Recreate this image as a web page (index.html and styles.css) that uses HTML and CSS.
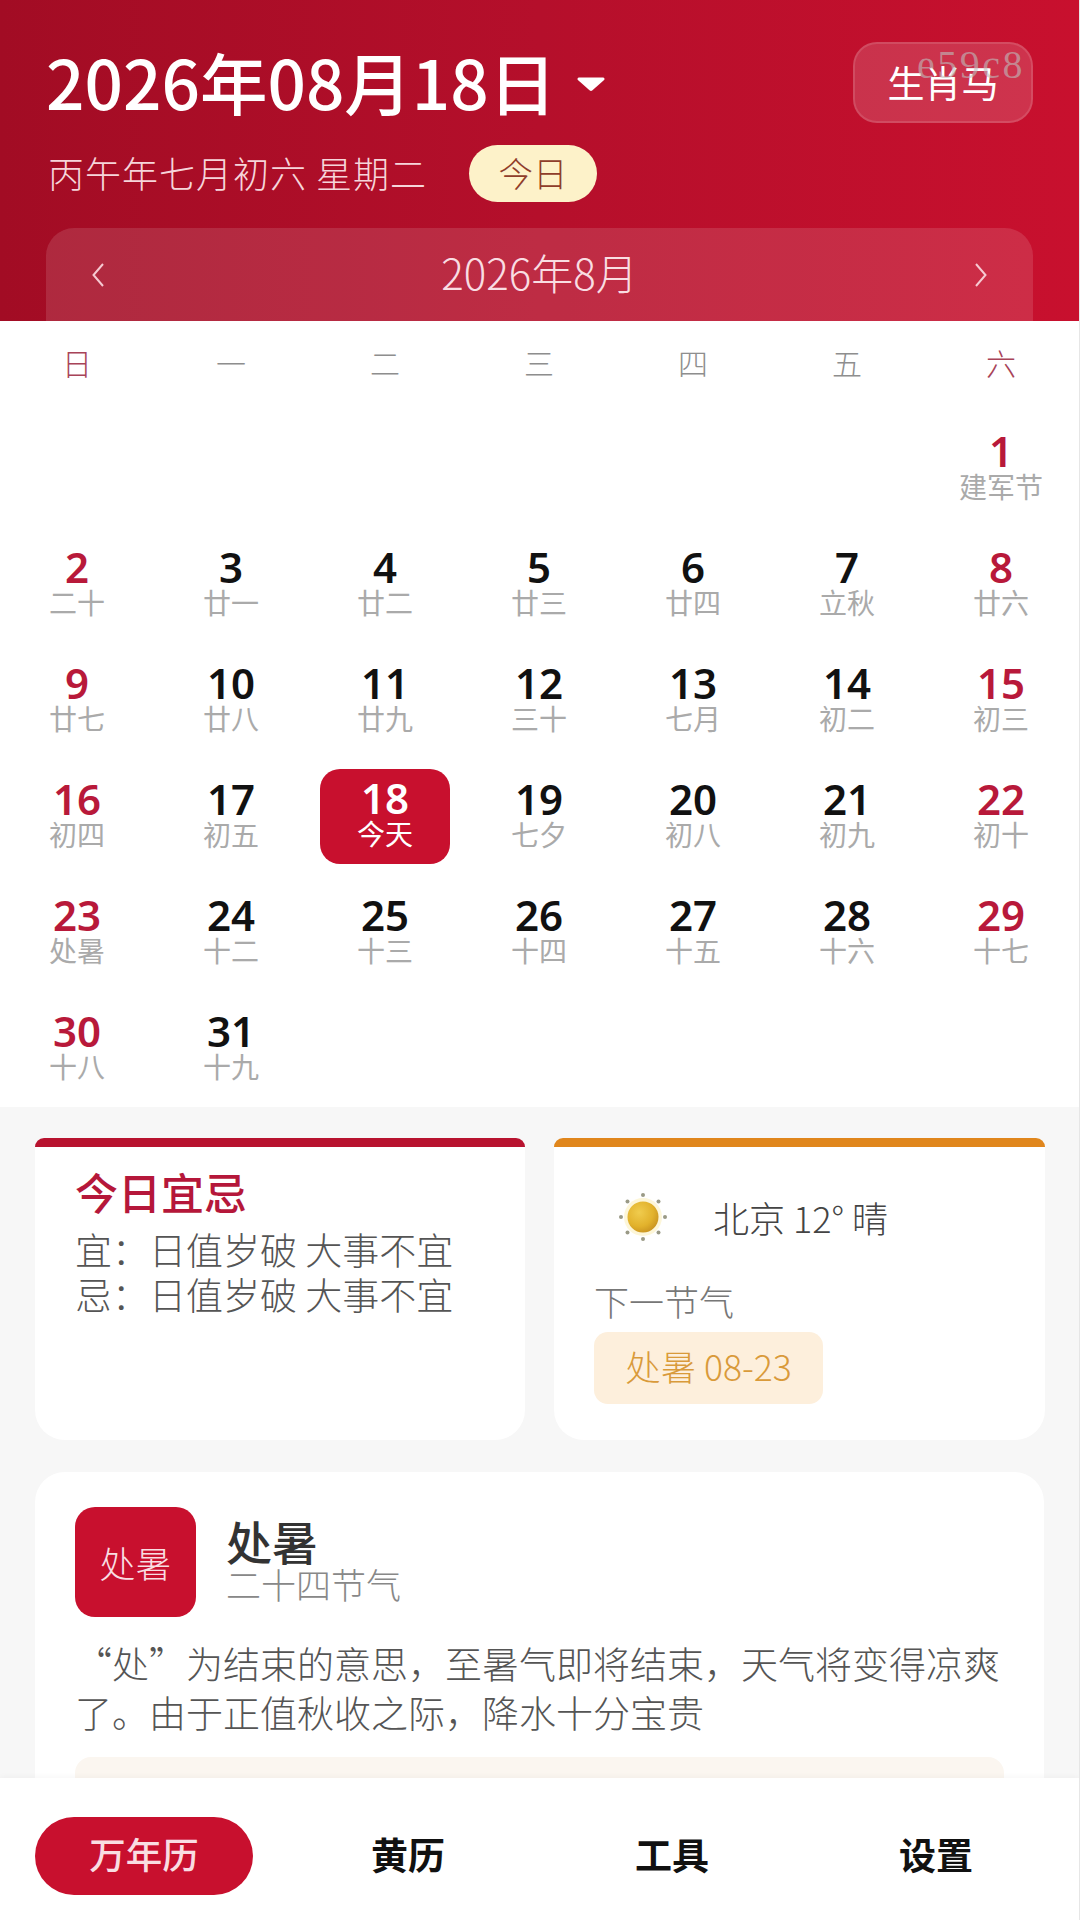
FILE: index.html
```html
<!DOCTYPE html>
<html lang="zh-CN">
<head>
<meta charset="utf-8">
<title>万年历</title>
<link rel="stylesheet" href="styles.css">
</head>
<body>
<div class="app">
  <main class="scroll">
    <header class="hero">
      <div class="hero-top">
        <div class="date-picker">
          <span class="date-text">2026年08月18日</span>
          <svg class="caret" width="30" height="16" viewBox="0 0 30 16"><path d="M3 1.500h24c1.400 0 2.100 1.600 1.100 2.600L16.200 14.600c-.7.600-1.700.600-2.400 0L1.900 4.100C.9 3.100 1.600 1.500 3 1.500z" fill="#fff"/></svg>
        </div>
        <div class="zodiac">
          <span class="zodiac-code">e59c8</span>
          <span class="zodiac-name">生肖马</span>
        </div>
      </div>
      <div class="hero-sub">
        <span class="lunar-line">丙午年七月初六 星期二</span>
        <span class="today-pill"><span>今日</span></span>
      </div>
      <div class="month-bar">
        <svg class="chev" width="16" height="26" viewBox="0 0 16 26"><path d="M13 2 3.500 13 13 24" fill="none" stroke="#f6c9d1" stroke-width="2"/></svg>
        <span class="month-title">2026年8月</span>
        <svg class="chev" width="16" height="26" viewBox="0 0 16 26"><path d="M3 2l9.500 11L3 24" fill="none" stroke="#f6c9d1" stroke-width="2"/></svg>
      </div>
    </header>

    <section class="calendar">
      <div class="week">
        <span class="wk-end">日</span><span>一</span><span>二</span><span>三</span><span>四</span><span>五</span><span class="wk-end">六</span>
      </div>
      <div class="days">
        <div class="day empty"></div><div class="day empty"></div><div class="day empty"></div><div class="day empty"></div><div class="day empty"></div><div class="day empty"></div>
        <div class="day end"><b>1</b><small>建军节</small></div>

        <div class="day end"><b>2</b><small>二十</small></div>
        <div class="day"><b>3</b><small>廿一</small></div>
        <div class="day"><b>4</b><small>廿二</small></div>
        <div class="day"><b>5</b><small>廿三</small></div>
        <div class="day"><b>6</b><small>廿四</small></div>
        <div class="day"><b>7</b><small>立秋</small></div>
        <div class="day end"><b>8</b><small>廿六</small></div>

        <div class="day end"><b>9</b><small>廿七</small></div>
        <div class="day"><b>10</b><small>廿八</small></div>
        <div class="day"><b>11</b><small>廿九</small></div>
        <div class="day"><b>12</b><small>三十</small></div>
        <div class="day"><b>13</b><small>七月</small></div>
        <div class="day"><b>14</b><small>初二</small></div>
        <div class="day end"><b>15</b><small>初三</small></div>

        <div class="day end"><b>16</b><small>初四</small></div>
        <div class="day"><b>17</b><small>初五</small></div>
        <div class="day today"><b>18</b><small>今天</small></div>
        <div class="day"><b>19</b><small>七夕</small></div>
        <div class="day"><b>20</b><small>初八</small></div>
        <div class="day"><b>21</b><small>初九</small></div>
        <div class="day end"><b>22</b><small>初十</small></div>

        <div class="day end"><b>23</b><small>处暑</small></div>
        <div class="day"><b>24</b><small>十二</small></div>
        <div class="day"><b>25</b><small>十三</small></div>
        <div class="day"><b>26</b><small>十四</small></div>
        <div class="day"><b>27</b><small>十五</small></div>
        <div class="day"><b>28</b><small>十六</small></div>
        <div class="day end"><b>29</b><small>十七</small></div>

        <div class="day end"><b>30</b><small>十八</small></div>
        <div class="day"><b>31</b><small>十九</small></div>
      </div>
    </section>

    <section class="duo">
      <article class="tile">
        <div class="tile-bar tile-bar-red"></div>
        <div class="tile-body advice">
          <h2 class="advice-title">今日宜忌</h2>
          <p class="advice-line">宜：日值岁破 大事不宜</p>
          <p class="advice-line">忌：日值岁破 大事不宜</p>
        </div>
      </article>
      <article class="tile">
        <div class="tile-bar tile-bar-amber"></div>
        <div class="tile-body weather">
          <div class="weather-now">
            <svg class="sun" width="56" height="56" viewBox="0 0 56 56">
              <defs>
                <radialGradient id="sunFill" cx="38%" cy="35%" r="75%">
                  <stop offset="0" stop-color="#f0cc4e"/>
                  <stop offset="0.6" stop-color="#e2b22c"/>
                  <stop offset="1" stop-color="#c48d1e"/>
                </radialGradient>
              </defs>
              <circle cx="28" cy="28" r="19" fill="#fdf6d8"/>
              <circle cx="28" cy="28" r="15.500" fill="url(#sunFill)"/>
              <g fill="#9a9a86">
                <circle cx="28" cy="6" r="2"/><circle cx="28" cy="50" r="2"/><circle cx="6" cy="28" r="2"/><circle cx="50" cy="28" r="2"/>
                <circle cx="12.500" cy="12.500" r="2"/><circle cx="43.500" cy="12.500" r="2"/><circle cx="12.500" cy="43.500" r="2"/><circle cx="43.500" cy="43.500" r="2"/>
              </g>
            </svg>
            <span class="weather-text">北京 12° 晴</span>
          </div>
          <div class="next-label">下一节气</div>
          <div class="next-chip">处暑 08-23</div>
        </div>
      </article>
    </section>

    <section class="term">
      <div class="term-head">
        <div class="term-badge">处暑</div>
        <div class="term-names">
          <h2 class="term-name">处暑</h2>
          <div class="term-kind">二十四节气</div>
        </div>
      </div>
      <p class="term-desc">“处”为结束的意思，至暑气即将结束，天气将变得凉爽了。由于正值秋收之际，降水十分宝贵</p>
      <div class="term-extra"></div>
    </section>
  </main>

  <nav class="tabs">
    <a class="tab tab-on"><span>万年历</span></a>
    <a class="tab"><span>黄历</span></a>
    <a class="tab"><span>工具</span></a>
    <a class="tab"><span>设置</span></a>
  </nav>
</div>
</body>
</html>
```
FILE: styles.css
```css
* { box-sizing: border-box; }

html, body {
  margin: 0;
  padding: 0;
  background: #f7f7f7;
}

body {
  font-family: "Noto Sans CJK SC", "Noto Sans", sans-serif;
  color: #333;
}

.app {
  width: 1080px;
  height: 1920px;
  display: flex;
  flex-direction: column;
  overflow: hidden;
  border-right: 1px solid #e6e6e6;
}

.scroll {
  flex: 1;
  min-height: 0;
  overflow: hidden;
}

/* Red header */
.hero {
  height: 321px;
  padding: 42px 46px 0 46px;
  background: linear-gradient(90deg, #a20c24 0%, #b50f2b 50%, #c8102e 100%);
  color: #fff;
  overflow: hidden;
}

.hero-top {
  display: flex;
  justify-content: space-between;
  align-items: center;
  height: 81px;
}

.date-picker {
  display: flex;
  align-items: center;
  gap: 20px;
  padding-bottom: 4px;
}

.date-text {
  font-size: 67.500px;
  font-weight: 500;
  line-height: 81px;
  white-space: nowrap;
}

.caret { margin-top: 6px; }

.zodiac {
  position: relative;
  width: 180px;
  height: 81px;
  display: flex;
  align-items: center;
  justify-content: center;
  font-size: 37px;
  border-radius: 24px;
  background: rgba(255, 255, 255, 0.15);
  border: 2px solid rgba(255, 255, 255, 0.12);
}

.zodiac-name { padding-bottom: 2px; }

.zodiac-code {
  position: absolute;
  top: -1px;
  right: 6px;
  font-family: "Liberation Serif", serif;
  font-size: 40px;
  line-height: 44px;
  letter-spacing: 2.500px;
  color: rgba(190, 190, 190, 0.6);
}

.hero-sub {
  display: flex;
  align-items: center;
  margin-top: 22px;
  height: 57px;
}

.lunar-line {
  margin-left: 2px;
  padding-bottom: 4px;
  font-size: 36px;
  font-weight: 300;
  letter-spacing: 1px;
  color: #f6d5da;
}

.today-pill {
  margin-left: 42px;
  width: 128px;
  height: 57px;
  display: flex;
  align-items: center;
  justify-content: center;
  padding-bottom: 4px;
  font-size: 34.500px;
  font-weight: 300;
  border-radius: 29px;
  background: #fdf2c9;
  color: #8f3d2a;
}

.month-bar {
  display: flex;
  align-items: center;
  justify-content: space-between;
  margin-top: 26px;
  height: 93px;
  padding: 0 44px;
  border-radius: 28px 28px 0 0;
  background: rgba(255, 255, 255, 0.12);
}

.month-title {
  padding-bottom: 6px;
  font-size: 42px;
  font-weight: 300;
  color: #f9dde2;
}

/* Month grid */
.calendar {
  background: #fff;
  height: 786px;
}

.week {
  display: grid;
  grid-template-columns: repeat(7, 154px);
  height: 90px;
  padding-top: 15px;
  font-size: 30px;
  font-weight: 300;
  line-height: 52px;
  text-align: center;
  color: #8e8e8e;
}

.wk-end { color: #a84358; }

.days {
  display: grid;
  grid-template-columns: repeat(7, 154px);
  grid-auto-rows: 116px;
}

.day {
  display: flex;
  flex-direction: column;
  align-items: center;
  justify-content: center;
  padding-bottom: 9px;
}

.day b {
  font-family: "Noto Sans", Roboto, sans-serif;
  font-size: 42px;
  font-weight: 600;
  line-height: 42px;
  color: #111;
}

.day small {
  font-size: 28px;
  line-height: 28px;
  color: #aaa;
}

.day.end b { color: #b8193a; }

.day.today {
  margin: 10px 12px 11px;
  border-radius: 20px;
  background: #c8102e;
}

.day.today b,
.day.today small { color: #fff; }

/* Advice and weather tiles */
.duo {
  display: grid;
  grid-template-columns: 490px 491px;
  gap: 29px;
  padding: 31px 35px 0;
}

.tile {
  display: flex;
  flex-direction: column;
  height: 302px;
}

.tile-bar {
  height: 9px;
  border-radius: 9px 9px 0 0;
}

.tile-bar-red { background: #b8132f; }
.tile-bar-amber { background: #e0861c; }

.tile-body {
  flex: 1;
  background: #fff;
  border-radius: 0 0 30px 30px;
}

.advice { padding: 17px 20px 0 40px; }

.advice-title {
  margin: 0 0 9px;
  font-size: 43px;
  font-weight: 500;
  line-height: 54px;
  color: #b5173a;
}

.advice-line {
  margin: 0;
  font-size: 37px;
  font-weight: 300;
  line-height: 45px;
  color: #555;
  white-space: nowrap;
}

.weather { padding: 42px 30px 0 40px; }

.weather-now {
  display: flex;
  align-items: center;
  gap: 42px;
  height: 56px;
  padding-left: 21px;
}

.weather-text {
  font-size: 36px;
  font-weight: 300;
  color: #444;
}

.next-label {
  margin-top: 31px;
  font-size: 35px;
  font-weight: 300;
  line-height: 50px;
  color: #777;
}

.next-chip {
  display: flex;
  align-items: center;
  justify-content: center;
  width: 229px;
  height: 72px;
  margin-top: 6px;
  padding-bottom: 6px;
  font-size: 35.500px;
  font-weight: 300;
  border-radius: 14px;
  background: #fdefdc;
  color: #d99a3a;
}

/* Solar term card */
.term {
  margin: 32px 35px 0;
  height: 500px;
  padding: 35px 40px 0;
  background: #fff;
  border-radius: 30px 30px 0 0;
}

.term-head {
  display: flex;
  align-items: center;
  gap: 30px;
}

.term-badge {
  width: 121px;
  height: 110px;
  display: flex;
  align-items: center;
  justify-content: center;
  font-size: 36px;
  font-weight: 300;
  border-radius: 20px;
  background: #c8102e;
  color: #f9dde2;
}

.term-names { padding-bottom: 9px; }

.term-name {
  margin: 0;
  font-size: 46px;
  font-weight: 500;
  line-height: 52px;
  color: #333;
}

.term-kind {
  font-size: 35px;
  font-weight: 300;
  line-height: 36px;
  color: #888;
}

.term-desc {
  margin: 22px 0 0;
  font-size: 37px;
  font-weight: 300;
  line-height: 49px;
  color: #555;
}

.term-extra {
  margin-top: 20px;
  height: 120px;
  border-radius: 16px;
  background: #fbf6f0;
}

/* Bottom tabs */
.tabs {
  flex: none;
  height: 142px;
  padding: 39px 12px 0 12px;
  display: grid;
  grid-template-columns: repeat(4, 264px);
  align-items: start;
  background: #fff;
  box-shadow: 0 -1px 6px rgba(0, 0, 0, 0.04);
  position: relative;
}

.tab {
  display: flex;
  justify-content: center;
  align-items: center;
  height: 78px;
  padding-bottom: 5px;
  font-size: 37px;
  font-weight: 700;
  color: #111;
}

.tab-on {
  margin: 0 23px;
  border-radius: 39px;
  background: #c8102e;
  color: #f9dde2;
  font-size: 36.500px;
  font-weight: 500;
}
```
